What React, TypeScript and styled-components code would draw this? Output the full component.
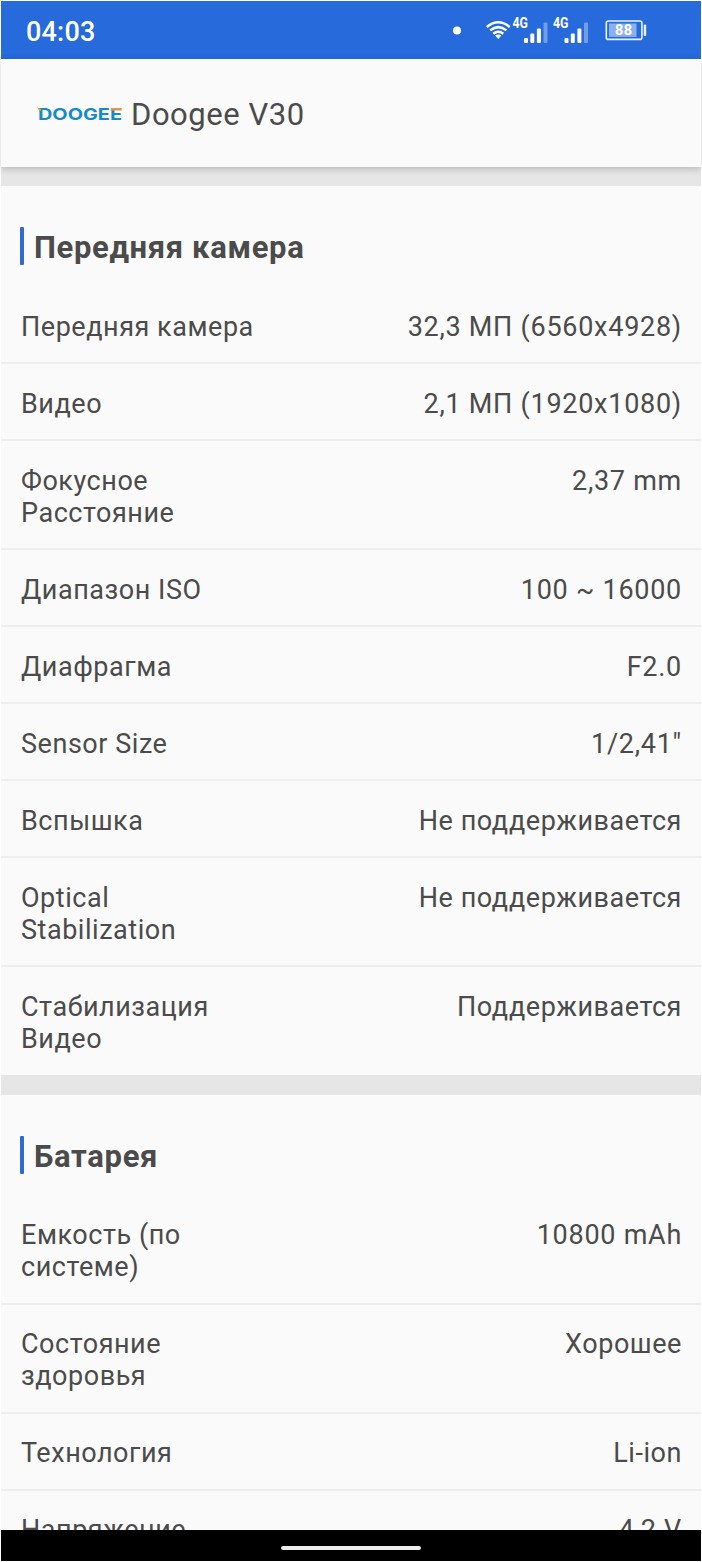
import React from 'react';
import styled, { createGlobalStyle } from 'styled-components';

const GlobalStyle = createGlobalStyle`
  html, body { margin: 0; padding: 0; background: #fff; }
  * { box-sizing: border-box; }
`;

const Screen = styled.div`
  display: flex;
  flex-direction: column;
  height: 1562px;
  padding: 1px 1px 1px;
  overflow: hidden;
  background: #fff;
  color: #4b4b4b;
  font-family: Roboto, "Liberation Sans", sans-serif;
`;

const StatusBar = styled.header`
  flex: none;
  display: flex;
  align-items: center;
  justify-content: space-between;
  height: 58px;
  padding: 3px 54px 0 25px;
  background: #266adb;
`;

const Clock = styled.span`
  color: #fff;
  font-size: 27px;
  font-weight: 500;
  line-height: 32px;
  letter-spacing: 0.2px;
`;

const StatusIcons = styled.svg`
  display: block;
  width: 196px;
  height: 32px;
`;

const AppBar = styled.div`
  flex: none;
  position: relative;
  display: flex;
  align-items: center;
  gap: 9px;
  height: 108px;
  padding: 3px 35px 0;
  background: #fafafa;
  box-shadow: 0 2px 7px rgba(0, 0, 0, 0.2);
`;

const Brand = styled.svg`
  display: block;
  width: 86px;
  height: 18px;
  overflow: visible;
`;

const DeviceName = styled.h1`
  margin: 0;
  font-size: 31px;
  font-weight: 400;
  line-height: 36px;
  letter-spacing: 0.55px;
`;

const Content = styled.main`
  flex: 1;
  min-height: 0;
  overflow: hidden;
  background: #fafafa;
`;

const Section = styled.section<{ $band: number }>`
  border-top: ${(p) => p.$band}px solid #e6e6e6;
`;

const SectionHeader = styled.div`
  display: flex;
  align-items: center;
  gap: 10px;
  height: 101px;
  padding: 19px 20px 0 19px;
`;

const Accent = styled.span`
  width: 4px;
  height: 38px;
  border-radius: 1px;
  background: #2f6bd0;
`;

const SectionTitle = styled.h2`
  margin: 3px 0 0;
  font-size: 31px;
  font-weight: 700;
  line-height: 38px;
  letter-spacing: 0.66px;
`;

const Row = styled.div<{ $top: number }>`
  display: flex;
  justify-content: space-between;
  padding: ${(p) => p.$top}px 19px ${(p) => 43 - p.$top}px 20px;
  border-bottom: 2px solid #eeeeee;
  font-size: 27px;
  line-height: 32px;
  letter-spacing: 0.54px;

  &:last-child {
    padding-bottom: 20px;
    border-bottom: 0;
  }
`;

const Label = styled.span`
  white-space: pre-line;
`;

const Value = styled.span<{ $numeric: boolean }>`
  white-space: nowrap;
  text-align: right;
  letter-spacing: ${(p) => (p.$numeric ? 0.73 : 0.55)}px;
`;

const NavBar = styled.footer`
  flex: none;
  display: flex;
  align-items: center;
  justify-content: center;
  height: 31px;
  padding-top: 4px;
  background: #000;
`;

const HomeHandle = styled.span`
  width: 140px;
  height: 4px;
  border-radius: 2px;
  background: #ececec;
`;

type Item = [label: string, value: string];

const sections: { title: string; band: number; rowTop: number; items: Item[] }[] = [
  {
    title: 'Передняя камера',
    band: 19,
    rowTop: 24,
    items: [
      ['Передняя камера', '32,3 МП (6560x4928)'],
      ['Видео', '2,1 МП (1920x1080)'],
      ['Фокусное\nРасстояние', '2,37 mm'],
      ['Диапазон ISO', '100 ~ 16000'],
      ['Диафрагма', 'F2.0'],
      ['Sensor Size', '1/2,41"'],
      ['Вспышка', 'Не поддерживается'],
      ['Optical\nStabilization', 'Не поддерживается'],
      ['Стабилизация\nВидео', 'Поддерживается'],
    ],
  },
  {
    title: 'Батарея',
    band: 20,
    rowTop: 23,
    items: [
      ['Емкость (по\nсистеме)', '10800 mAh'],
      ['Состояние\nздоровья', 'Хорошее'],
      ['Технология', 'Li-ion'],
      ['Напряжение', '4,2 V'],
    ],
  },
];

const Signal = ({ x }: { x: number }) => (
  <g transform={`translate(${x} 0)`} fill="#fff">
    <text x="0" y="12" fontSize="14.5" fontWeight="700" textLength="15.5" lengthAdjust="spacingAndGlyphs">4G</text>
    <rect x="11.5" y="22" width="4" height="5" rx="1" />
    <rect x="17.8" y="17.5" width="4" height="9.5" rx="1" />
    <rect x="24.4" y="12.5" width="4" height="14.5" rx="1" />
    <rect x="31" y="6.5" width="4" height="20.5" rx="1" opacity="0.35" />
  </g>
);

const SystemIcons = () => (
  <StatusIcons viewBox="0 0 196 32" fontFamily="Roboto, sans-serif">
    <circle cx="6" cy="14.5" r="4" fill="#fff" />
    <g fill="none" stroke="#fff" strokeWidth="2.5">
      <path d="M35.8 11Q47.3 1.6 58.8 11" />
      <path d="M39.2 14.4Q47.3 7.8 55.4 14.4" />
      <path d="M42.3 17.8Q47.3 13.6 52.3 17.8" />
    </g>
    <path d="M44.2 19.5Q47.3 17.4 50.4 19.5L47.3 23Z" fill="#fff" />
    <Signal x={61.5} />
    <Signal x={102} />
    <rect x="155.3" y="5" width="35.6" height="18.4" rx="2" fill="none" stroke="#e7f3ff" strokeWidth="1.6" />
    <rect x="158" y="7.5" width="27.5" height="13.4" fill="#8db0ec" />
    <rect x="192.7" y="8.5" width="2.5" height="11.5" rx="1" fill="#e7f3ff" />
    <text x="164" y="19.4" fontSize="14.5" fontWeight="700" fill="#fff" textLength="17">88</text>
  </StatusIcons>
);

const BrandLogo = () => (
  <Brand viewBox="0 0 86 18" role="img">
    <text x="2" y="14" fontFamily="Inter, sans-serif" fontSize="16" fontWeight="700" fill="#168bc9" textLength="84" lengthAdjust="spacingAndGlyphs">DOOGEE</text>
    <path d="M.8 .9L5 3.1V5.1L3.2 4.7Z" fill="#f39b2c" />
    <path d="M75 2H85.5V4.5H74.5Z" fill="#dd9850" />
  </Brand>
);

export default function App() {
  return (
    <>
      <GlobalStyle />
      <Screen>
        <StatusBar>
          <Clock>04:03</Clock>
          <SystemIcons />
        </StatusBar>
        <AppBar>
          <BrandLogo />
          <DeviceName>Doogee V30</DeviceName>
        </AppBar>
        <Content>
          {sections.map((section) => (
            <Section key={section.title} $band={section.band}>
              <SectionHeader>
                <Accent />
                <SectionTitle>{section.title}</SectionTitle>
              </SectionHeader>
              {section.items.map(([label, value]) => (
                <Row key={label} $top={section.rowTop}>
                  <Label>{label}</Label>
                  <Value $numeric={/\d/.test(value)}>{value}</Value>
                </Row>
              ))}
            </Section>
          ))}
        </Content>
        <NavBar>
          <HomeHandle />
        </NavBar>
      </Screen>
    </>
  );
}
